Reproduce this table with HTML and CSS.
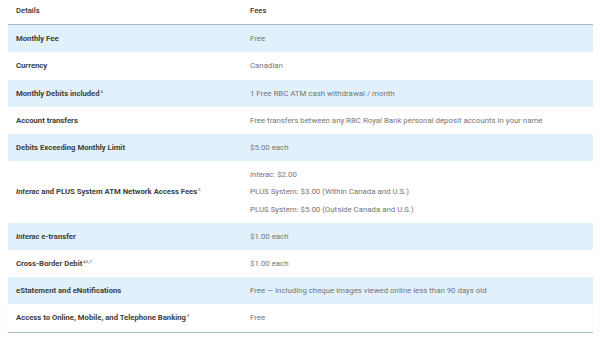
FILE: index.html
```html
<!DOCTYPE html>
<html lang="en">
<head>
<meta charset="utf-8">
<title>Account fees</title>
<link rel="stylesheet" href="styles.css">
</head>
<body>
<div class="fees">
  <div class="row head">
    <div class="cell label">Details</div>
    <div class="cell value">Fees</div>
  </div>
  <div class="row alt">
    <div class="cell label">Monthly Fee</div>
    <div class="cell value">Free</div>
  </div>
  <div class="row">
    <div class="cell label">Currency</div>
    <div class="cell value">Canadian</div>
  </div>
  <div class="row alt">
    <div class="cell label">Monthly Debits included<sup>4</sup></div>
    <div class="cell value">1 Free RBC ATM cash withdrawal / month</div>
  </div>
  <div class="row">
    <div class="cell label">Account transfers</div>
    <div class="cell value">Free transfers between any RBC Royal Bank personal deposit accounts in your name</div>
  </div>
  <div class="row alt">
    <div class="cell label">Debits Exceeding Monthly Limit</div>
    <div class="cell value">$5.00 each</div>
  </div>
  <div class="row">
    <div class="cell label"><em>Interac</em> and PLUS System ATM Network Access Fees<sup>5</sup></div>
    <div class="cell value stack">
      <p><em>Interac</em>: $2.00</p>
      <p>PLUS System: $3.00 (Within Canada and U.S.)</p>
      <p>PLUS System: $5.00 (Outside Canada and U.S.)</p>
    </div>
  </div>
  <div class="row alt">
    <div class="cell label"><em>Interac</em> e-transfer</div>
    <div class="cell value">$1.00 each</div>
  </div>
  <div class="row">
    <div class="cell label">Cross-Border Debit<sup>4,6,7</sup></div>
    <div class="cell value">$1.00 each</div>
  </div>
  <div class="row alt">
    <div class="cell label">eStatement and eNotifications</div>
    <div class="cell value">Free — including cheque images viewed online less than 90 days old</div>
  </div>
  <div class="row last">
    <div class="cell label">Access to Online, Mobile, and Telephone Banking<sup>3</sup></div>
    <div class="cell value">Free</div>
  </div>
</div>
</body>
</html>
```

FILE: styles.css
```css
html, body {
  margin: 0;
  padding: 0;
  background: #ffffff;
}

body {
  font-family: Roboto, "Liberation Sans", Arial, sans-serif;
  font-size: 7.7px;
  line-height: 9.2px;
  color: #333333;
}

.fees {
  width: 585px;
  margin: 0 7px 0 8px;
  display: flex;
  flex-direction: column;
}

.row {
  display: grid;
  grid-template-columns: 234px 1fr;
  align-items: center;
}

.row.alt {
  background: #e1f1fb;
}

.row.head {
  border-bottom: 1px solid #a3bccd;
}

.row.last {
  border-bottom: 1px solid #a3bccd;
  box-shadow: 0 1px 1px rgba(140, 170, 190, 0.35);
}

.cell {
  padding: 9px 8px;
  white-space: nowrap;
}

.head .cell {
  padding: 6px 8px 9px;
  font-weight: 500;
  color: #333333;
}

.label {
  font-weight: 700;
  color: #404040;
}

.head .label {
  font-weight: 500;
}

.value {
  font-size: 7.85px;
  font-weight: 400;
  color: #757575;
}

.head .value {
  font-size: 7.7px;
  color: #333333;
}

.stack {
  display: flex;
  flex-direction: column;
  gap: 8px;
}

.stack p {
  margin: 0;
}

em {
  font-style: italic;
}

sup {
  font-size: 4px;
  line-height: 0;
  vertical-align: 3px;
  margin-left: 1px;
  font-weight: 400;
}
```
